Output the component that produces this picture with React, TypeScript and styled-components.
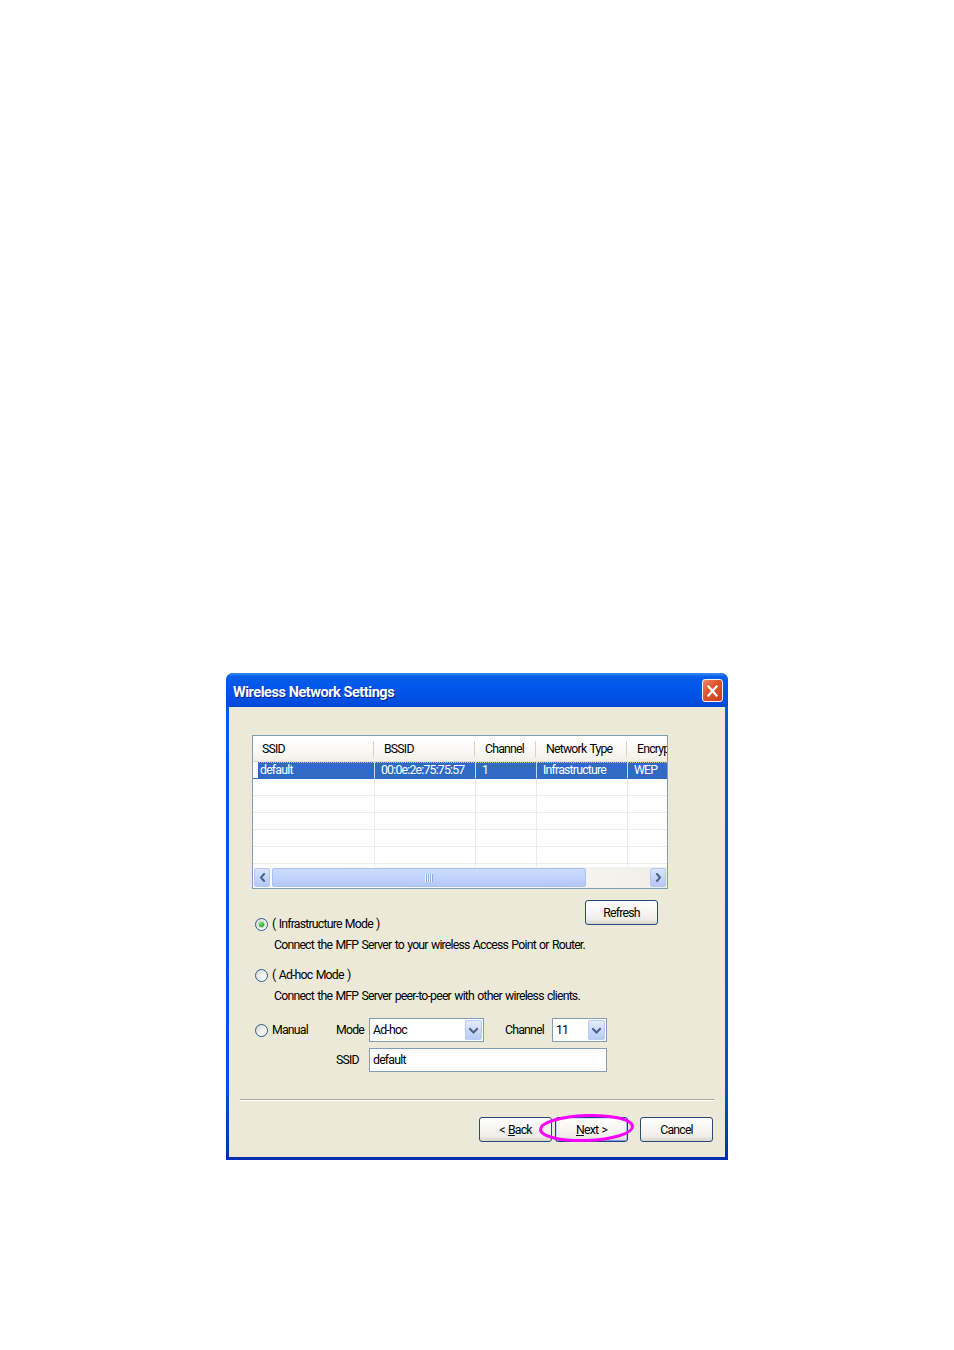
import React from "react";
import styled, { createGlobalStyle, css } from "styled-components";

const FONT = `Roboto, "Liberation Sans", Arial, sans-serif`;

const GlobalStyle = createGlobalStyle`
  html, body { margin: 0; padding: 0; background: #ffffff; }
  #root { width: 954px; min-height: 1350px; }
`;

const Page = styled.div`
  box-sizing: border-box;
  width: 954px;
  height: 1350px;
  padding: 673px 0 0 226px;
  font-family: ${FONT};
  font-size: 12.3px;
  letter-spacing: -0.8px;
  word-spacing: 1px;
  color: #000;
`;

const Window = styled.div`
  width: 502px;
  display: flex;
  flex-direction: column;
  background: linear-gradient(180deg, #0058ee 0%, #0050e2 85%, #0030b0 100%);
  border-radius: 7px 7px 0 0;
  overflow: hidden;
`;

const TitleBar = styled.div`
  height: 34px;
  flex: none;
  display: flex;
  align-items: center;
  justify-content: space-between;
  padding: 0 5px 0 7px;
  background: linear-gradient(
    180deg,
    #3d8ef7 0%,
    #0a5fe8 10%,
    #0058ea 35%,
    #0052e4 70%,
    #0048d6 100%
  );
`;

const Title = styled.span`
  font-family: ${FONT};
  font-weight: bold;
  font-size: 14.5px;
  letter-spacing: -0.45px;
  word-spacing: 0;
  color: #ffffff;
  text-shadow: 1px 1px 0 #0a1f8a;
  padding-top: 4px;
`;

const CloseButton = styled.div`
  width: 21px;
  height: 23px;
  box-sizing: border-box;
  border: 1px solid #f4f0ee;
  border-radius: 3px;
  background: linear-gradient(135deg, #f08a6a 0%, #e0552f 40%, #c8401c 100%);
  display: flex;
  align-items: center;
  justify-content: center;
  margin-top: 1px;
`;

const Body = styled.div`
  margin: 0 3px 3px;
  background: #ece9d8;
  padding: 28px 0 15px;
  display: flex;
  flex-direction: column;
`;

/* ---------- list view ---------- */

const COLS = "122px 101px 61px 91px 80px";

const ListView = styled.div`
  margin-left: 23px;
  width: 416px;
  height: 154px;
  box-sizing: border-box;
  border: 1px solid #7f9db9;
  background: #ffffff;
  display: flex;
  flex-direction: column;
  overflow: hidden;
`;

const HeaderRow = styled.div`
  flex: none;
  display: grid;
  grid-template-columns: ${COLS};
  width: max-content;
  height: 26px;
  padding-top: 1px;
  box-sizing: border-box;
  background: linear-gradient(180deg, #ffffff 0%, #faf9f5 60%, #f1efe6 100%);
  border-bottom: 1px solid #e2dfd1;
`;

const HeaderCell = styled.div`
  position: relative;
  display: flex;
  align-items: center;
  padding-left: 9px;
  white-space: nowrap;
  overflow: hidden;
  &::after {
    content: "";
    position: absolute;
    right: 1px;
    top: 4px;
    bottom: 4px;
    width: 1px;
    background: #d8d4c4;
  }
`;

const RowsArea = styled.div`
  flex: 1;
  overflow: hidden;
`;

const Row = styled.div`
  display: grid;
  grid-template-columns: ${COLS};
  width: max-content;
  height: 17px;
`;

const Cell = styled.div<{ $selected?: boolean; $first?: boolean }>`
  box-sizing: border-box;
  height: 17px;
  padding-left: 6px;
  line-height: 17px;
  white-space: nowrap;
  overflow: hidden;
  border-right: 1px solid #efede3;
  border-bottom: 1px solid #efede3;
  ${(p) =>
    p.$selected &&
    css`
      background-color: #316ac5;
      color: #ffffff;
      border-right-color: #c9d6ee;
      border-bottom-color: #316ac5;
      background-image: repeating-linear-gradient(
        90deg,
        #d9c48c 0 1px,
        transparent 1px 2px
      );
      background-size: 100% 1px;
      background-repeat: no-repeat;
    `}
  ${(p) =>
    p.$first &&
    css`
      box-shadow: inset 5px 0 0 #ffffff;
      padding-left: 7px;
    `}
`;

const HScroll = styled.div`
  flex: none;
  height: 21px;
  box-sizing: border-box;
  padding: 1px;
  display: flex;
  gap: 2px;
  background: linear-gradient(90deg, #fefefb 0%, #f7f6f1 70%, #efeee7 100%);
`;

const ScrollButton = styled.div`
  width: 16px;
  flex: none;
  box-sizing: border-box;
  border: 1px solid #b4c6f1;
  border-radius: 2px;
  background: linear-gradient(180deg, #dbe6ff 0%, #c4d5fb 50%, #b5c9f6 100%);
  display: flex;
  align-items: center;
  justify-content: center;
`;

const Thumb = styled.div`
  width: 314px;
  flex: none;
  box-sizing: border-box;
  border: 1px solid #a9c0f2;
  border-radius: 2px;
  background: linear-gradient(180deg, #cddcfd 0%, #bfd3fc 50%, #b2c8f8 100%);
  display: flex;
  align-items: center;
  justify-content: center;
`;

const Grip = styled.span`
  width: 8px;
  height: 8px;
  background: repeating-linear-gradient(
    90deg,
    #eef3ff 0 1px,
    #8fa9e0 1px 2px
  );
`;

const Track = styled.div`
  flex: 1;
`;

/* ---------- options ---------- */

const Options = styled.div`
  margin: 11px 0 0 26px;
  width: 403px;
  display: flex;
  flex-direction: column;
`;

const TopLine = styled.div`
  display: flex;
  justify-content: space-between;
  align-items: flex-end;
`;

const RadioLine = styled.label<{ $gapTop?: number }>`
  display: flex;
  align-items: center;
  gap: 4px;
  height: 14px;
  line-height: 14px;
  margin-top: ${(p) => p.$gapTop ?? 0}px;
  white-space: nowrap;
`;

const RadioCircle = styled.span<{ $checked?: boolean }>`
  flex: none;
  width: 13px;
  height: 13px;
  box-sizing: border-box;
  border-radius: 50%;
  border: 1px solid #2a5c8c;
  background: linear-gradient(135deg, #d8d8d0 0%, #f2f2ee 55%, #ffffff 100%);
  display: flex;
  align-items: center;
  justify-content: center;
  ${(p) =>
    p.$checked &&
    css`
      &::after {
        content: "";
        width: 5px;
        height: 5px;
        border-radius: 50%;
        background: radial-gradient(circle at 40% 35%, #7ee37e 0%, #21a121 70%);
        box-shadow: 0 0 0 1px #b6e6b0;
      }
    `}
`;

const Description = styled.div`
  margin: 7px 0 0 19px;
  line-height: 14px;
  white-space: nowrap;
`;

const ManualRow = styled.div`
  margin-top: 15px;
  display: flex;
  align-items: center;
  height: 24px;
`;

const ManualLabel = styled.div`
  width: 81px;
  flex: none;
`;

const FieldLabel = styled.span<{ $w: number; $ml?: number }>`
  width: ${(p) => p.$w}px;
  margin-left: ${(p) => p.$ml ?? 0}px;
  flex: none;
  white-space: nowrap;
`;

const Select = styled.div<{ $w: number }>`
  width: ${(p) => p.$w}px;
  height: 24px;
  flex: none;
  box-sizing: border-box;
  border: 1px solid #7f9db9;
  background: #ffffff;
  padding: 1px;
  display: flex;
  align-items: stretch;
`;

const SelectText = styled.span`
  flex: 1;
  padding-left: 2px;
  display: flex;
  align-items: center;
  white-space: nowrap;
`;

const DropButton = styled.span`
  width: 17px;
  flex: none;
  box-sizing: border-box;
  border: 1px solid #b9cbf3;
  border-radius: 2px;
  background: linear-gradient(180deg, #e3ecff 0%, #c9d8fc 55%, #b7cbf7 100%);
  display: flex;
  align-items: center;
  justify-content: center;
`;

const SsidRow = styled.div`
  margin: 6px 0 0 81px;
  display: flex;
  align-items: center;
  height: 24px;
`;

const TextInput = styled.div<{ $w: number }>`
  width: ${(p) => p.$w}px;
  height: 24px;
  box-sizing: border-box;
  border: 1px solid #7f9db9;
  background: #ffffff;
  padding-left: 3px;
  display: flex;
  align-items: center;
`;

/* ---------- footer ---------- */

const Footer = styled.div`
  margin-top: 27px;
  padding: 0 11px;
  display: flex;
  flex-direction: column;
`;

const Separator = styled.div`
  height: 0;
  border-top: 1px solid #aca899;
  border-bottom: 1px solid #ffffff;
`;

const ButtonRow = styled.div`
  margin-top: 16px;
  padding-right: 1px;
  display: flex;
  justify-content: flex-end;
`;

const XPButton = styled.div<{ $default?: boolean; $mr?: number }>`
  position: relative;
  width: 73px;
  height: 25px;
  box-sizing: border-box;
  margin-right: ${(p) => p.$mr ?? 0}px;
  border: 1px solid #2a4a7c;
  border-radius: 3px;
  background: linear-gradient(
    180deg,
    #ffffff 0%,
    #f7f6f2 45%,
    #eeede8 80%,
    #d9d4ca 100%
  );
  display: flex;
  align-items: center;
  justify-content: center;
  white-space: nowrap;
  ${(p) =>
    p.$default &&
    css`
      border-color: #21407a;
      box-shadow: inset 0 1px 0 #cee0ff, inset 1px 0 0 #bcd2fb,
        inset -1px 0 0 #a4bff3, inset 0 -1px 0 #7d9ee6;
    `}
`;

const RefreshButton = styled(XPButton)`
  align-self: flex-start;
  margin-bottom: 6px;
`;

const Key = styled.span`
  text-decoration: underline;
  text-underline-offset: 1px;
`;

const Highlight = styled.svg`
  position: absolute;
  left: -18px;
  top: -5px;
  pointer-events: none;
  overflow: visible;
`;

/* ---------- icons ---------- */

const Chevron = ({ dir }: { dir: "left" | "right" | "down" }) => {
  const d =
    dir === "left"
      ? "M5 1 L2 4.5 L5 8"
      : dir === "right"
      ? "M2 1 L5 4.5 L2 8"
      : "M1 2 L4.5 5.5 L8 2";
  const w = dir === "down" ? 9 : 7;
  const h = dir === "down" ? 7 : 9;
  return (
    <svg width={w} height={h} viewBox={`0 0 ${w} ${h}`}>
      <path d={d} fill="none" stroke="#4d6185" strokeWidth="2" strokeLinecap="square" />
    </svg>
  );
};

const CloseIcon = () => (
  <svg width="11" height="12" viewBox="0 0 11 12">
    <path d="M1.5 1.5 L9.5 10.5 M9.5 1.5 L1.5 10.5" stroke="#ffffff" strokeWidth="2.2" strokeLinecap="square" />
  </svg>
);

type Net = { ssid: string; bssid: string; channel: string; type: string; enc: string };

const networks: Net[] = [
  { ssid: "default", bssid: "00:0e:2e:75:75:57", channel: "1", type: "Infrastructure", enc: "WEP" },
];

const EMPTY_ROWS = 6;

export default function App() {
  const headers = ["SSID", "BSSID", "Channel", "Network Type", "Encryption"];
  return (
    <Page>
      <GlobalStyle />
      <Window>
        <TitleBar>
          <Title>Wireless Network Settings</Title>
          <CloseButton>
            <CloseIcon />
          </CloseButton>
        </TitleBar>
        <Body>
          <ListView>
            <HeaderRow>
              {headers.map((h) => (
                <HeaderCell key={h}>{h}</HeaderCell>
              ))}
            </HeaderRow>
            <RowsArea>
              {networks.map((n) => (
                <Row key={n.bssid}>
                  <Cell $selected $first>{n.ssid}</Cell>
                  <Cell $selected>{n.bssid}</Cell>
                  <Cell $selected>{n.channel}</Cell>
                  <Cell $selected>{n.type}</Cell>
                  <Cell $selected>{n.enc}</Cell>
                </Row>
              ))}
              {Array.from({ length: EMPTY_ROWS }).map((_, i) => (
                <Row key={i}>
                  {headers.map((h) => (
                    <Cell key={h} />
                  ))}
                </Row>
              ))}
            </RowsArea>
            <HScroll>
              <ScrollButton>
                <Chevron dir="left" />
              </ScrollButton>
              <Thumb>
                <Grip />
              </Thumb>
              <Track />
              <ScrollButton>
                <Chevron dir="right" />
              </ScrollButton>
            </HScroll>
          </ListView>

          <Options>
            <TopLine>
              <RadioLine>
                <RadioCircle $checked />( Infrastructure Mode )
              </RadioLine>
              <RefreshButton>Refresh</RefreshButton>
            </TopLine>
            <Description>Connect the MFP Server to your wireless Access Point or Router.</Description>
            <RadioLine $gapTop={16}>
              <RadioCircle />( Ad-hoc Mode )
            </RadioLine>
            <Description>Connect the MFP Server peer-to-peer with other wireless clients.</Description>

            <ManualRow>
              <ManualLabel>
                <RadioLine>
                  <RadioCircle />Manual
                </RadioLine>
              </ManualLabel>
              <FieldLabel $w={33}>Mode</FieldLabel>
              <Select $w={115}>
                <SelectText>Ad-hoc</SelectText>
                <DropButton>
                  <Chevron dir="down" />
                </DropButton>
              </Select>
              <FieldLabel $w={47} $ml={21}>Channel</FieldLabel>
              <Select $w={55}>
                <SelectText>11</SelectText>
                <DropButton>
                  <Chevron dir="down" />
                </DropButton>
              </Select>
            </ManualRow>
            <SsidRow>
              <FieldLabel $w={33}>SSID</FieldLabel>
              <TextInput $w={238}>default</TextInput>
            </SsidRow>
          </Options>

          <Footer>
            <Separator />
            <ButtonRow>
              <XPButton $mr={3}>
                &lt;&nbsp;<Key>B</Key>ack
              </XPButton>
              <XPButton $default $mr={12}>
                <Key>N</Key>ext &gt;
                <Highlight width="97" height="30" viewBox="0 0 97 30">
                  <ellipse
                    cx="48.5"
                    cy="15"
                    rx="46"
                    ry="12.5"
                    fill="none"
                    stroke="#ff00ff"
                    strokeWidth="3"
                    transform="rotate(-2 48.5 15)"
                  />
                </Highlight>
              </XPButton>
              <XPButton>Cancel</XPButton>
            </ButtonRow>
          </Footer>
        </Body>
      </Window>
    </Page>
  );
}
